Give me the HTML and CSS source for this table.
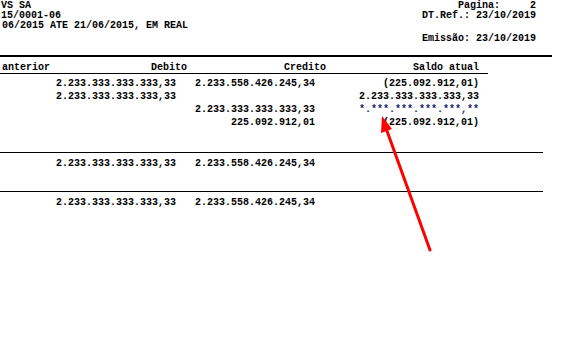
FILE: index.html
```html
<!DOCTYPE html>
<html>
<head>
<meta charset="utf-8">
<link rel="stylesheet" href="styles.css">
</head>
<body>
<div class="page">
  <header class="head">
    <div class="head-left">
      <div class="hl">VS SA</div>
      <div class="hl">15/0001-06</div>
      <div class="hl cut">06/2015 ATE 21/06/2015, EM REAL</div>
    </div>
    <div class="head-right">
      <div class="hr">Pagina:     2</div>
      <div class="hr">DT.Ref.: 23/10/2019</div>
      <div class="hr gap">Emissão: 23/10/2019</div>
    </div>
  </header>
  <div class="topbar"></div>
  <div class="grid thead">
    <div class="c0">anterior</div>
    <div class="c1 h">Debito</div>
    <div class="c2 h">Credito</div>
    <div class="c3 h">Saldo atual</div>
  </div>
  <div class="body">
    <div class="grid row">
      <div class="c0"></div>
      <div class="c1">2.233.333.333.333,33</div>
      <div class="c2">2.233.558.426.245,34</div>
      <div class="c3">(225.092.912,01)</div>
    </div>
    <div class="grid row">
      <div class="c0"></div>
      <div class="c1">2.233.333.333.333,33</div>
      <div class="c2"></div>
      <div class="c3">2.233.333.333.333,33</div>
    </div>
    <div class="grid row">
      <div class="c0"></div>
      <div class="c1"></div>
      <div class="c2">2.233.333.333.333,33</div>
      <div class="c3 mask">*.***.***.***.***,**</div>
    </div>
    <div class="grid row">
      <div class="c0"></div>
      <div class="c1"></div>
      <div class="c2">225.092.912,01</div>
      <div class="c3">(225.092.912,01)</div>
    </div>
  </div>
  <div class="total first">
    <div class="grid row">
      <div class="c0"></div>
      <div class="c1">2.233.333.333.333,33</div>
      <div class="c2">2.233.558.426.245,34</div>
      <div class="c3"></div>
    </div>
  </div>
  <div class="total second">
    <div class="grid row">
      <div class="c0"></div>
      <div class="c1">2.233.333.333.333,33</div>
      <div class="c2">2.233.558.426.245,34</div>
      <div class="c3"></div>
    </div>
  </div>
  <svg class="arrow" width="563" height="356" viewBox="0 0 563 356">
    <line x1="430" y1="250" x2="387" y2="131" stroke="#ff0000" stroke-width="3" stroke-linecap="round"/>
    <polygon points="382,116 392,129 381,133" fill="#ff0000"/>
  </svg>
</div>
</body>
</html>
```
FILE: styles.css
```css
html, body {
  margin: 0;
  padding: 0;
  background: #ffffff;
}
body {
  width: 563px;
  height: 356px;
  overflow: hidden;
  font-family: "Liberation Mono", "Courier New", monospace;
  font-weight: bold;
  font-size: 10px;
  color: #000000;
}
.page {
  position: relative;
  width: 563px;
  height: 356px;
}
.head {
  display: flex;
  justify-content: space-between;
  height: 54px;
  padding-top: 1px;
}
.head-left {
  padding-left: 1px;
}
.hl {
  line-height: 10px;
  white-space: pre;
}
.cut {
  margin-left: 1px;
}
.head-right {
  width: 536px;
  text-align: right;
  position: absolute;
  left: 0;
  top: 1px;
  pointer-events: none;
}
.hr {
  line-height: 10px;
  white-space: pre;
}
.hr.gap {
  margin-top: 13px;
}
.topbar {
  width: 552px;
  height: 2px;
  background: #000000;
}
.grid {
  display: grid;
  grid-template-columns: 50px 137px 139px 162px;
  white-space: pre;
}
.thead {
  width: 488px;
  padding-top: 5px;
  line-height: 11px;
  border-bottom: 1px solid #000000;
}
.thead .c0 {
  padding-left: 2px;
}
.thead .h {
  text-align: right;
}
.thead .c3 {
  padding-right: 9px;
}
.body {
  padding-top: 3px;
}
.row {
  line-height: 13px;
}
.row .c1, .row .c2 {
  text-align: right;
  padding-right: 11px;
}
.row .c3 {
  text-align: right;
  padding-right: 9px;
}
.mask {
  color: #1a2470;
}
.total {
  width: 543px;
  border-top: 1px solid #000000;
  padding-top: 4px;
}
.total.first {
  margin-top: 23px;
}
.total.second {
  margin-top: 21px;
}
.arrow {
  position: absolute;
  left: 0;
  top: 0;
  pointer-events: none;
}
```
